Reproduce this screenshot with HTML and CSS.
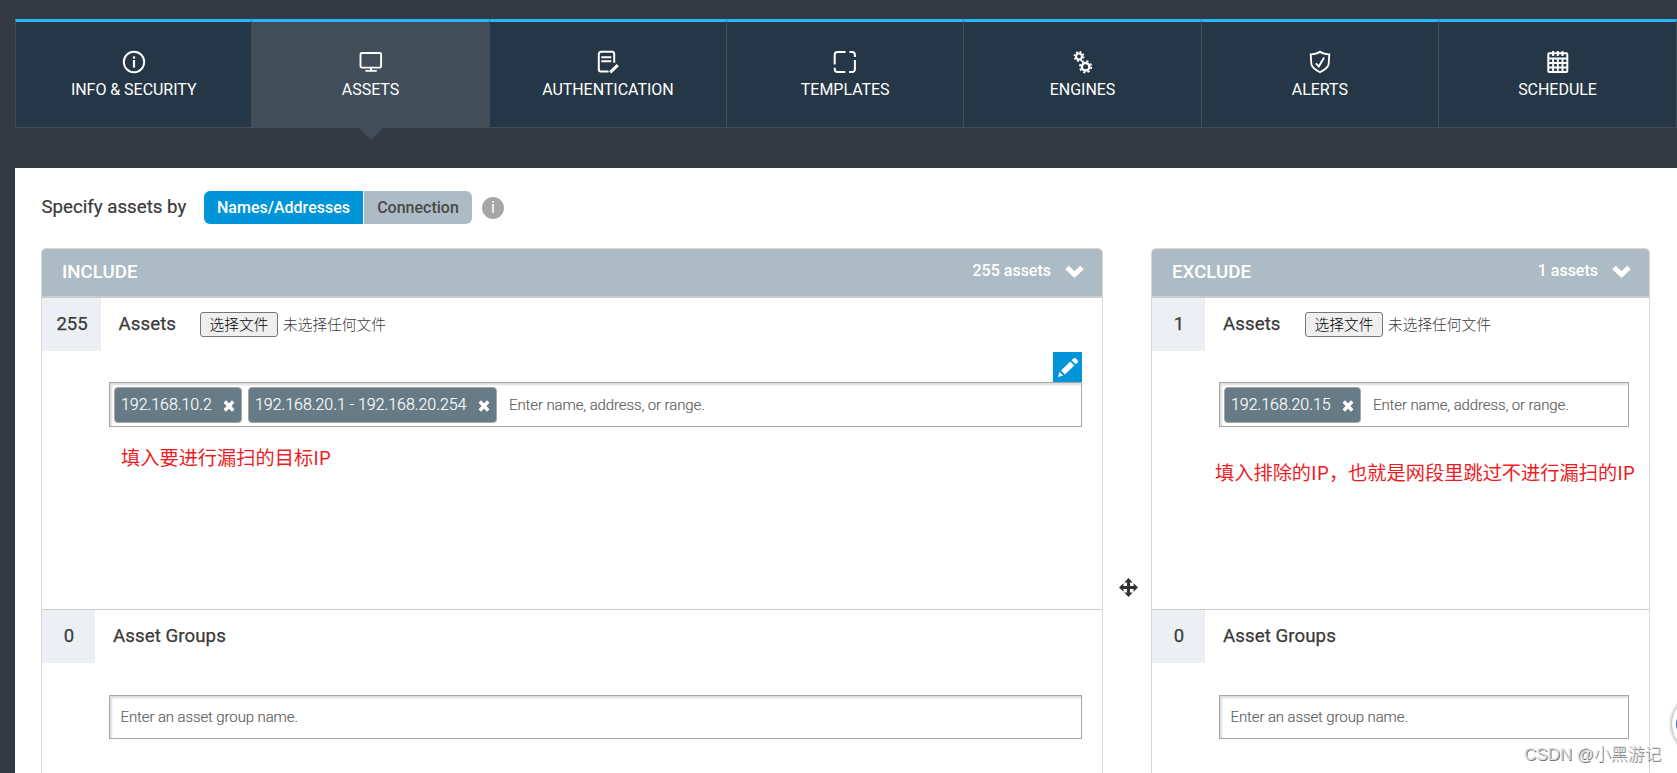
FILE: index.html
```html
<!DOCTYPE html>
<html lang="zh-CN">
<head>
<meta charset="utf-8">
<title>Site configuration</title>
<link rel="stylesheet" href="styles.css">
</head>
<body>
<nav class="tabs">
  <a class="tab"><svg class="tab-icon" viewBox="0 0 24 24"><circle cx="12" cy="12" r="10.2" stroke-width="1.9"/><path d="M12 10v7.6" stroke-width="2.2"/><path d="M12 6.4v2.2" stroke-width="2.2"/></svg><span class="tab-label">INFO &amp; SECURITY</span></a>
  <a class="tab active"><svg class="tab-icon" viewBox="0 0 24 24"><rect x="1.5" y="3" width="20.6" height="14.6" rx="1.4" stroke-width="1.9"/><path d="M12 17.6v3M6.4 20.9h11.4" stroke-width="1.9"/></svg><span class="tab-label">ASSETS</span></a>
  <a class="tab"><svg class="tab-icon" viewBox="0 0 24 24"><path d="M18.2 12.8V4a2.2 2.2 0 0 0-2.2-2.2H5A2.2 2.2 0 0 0 2.8 4v15.3A2.2 2.2 0 0 0 5 21.500h7.600M5.300 7.200h10M5.300 11.200h10" stroke-width="2"/><path d="M14.200 22.300l7.600-7.200" stroke-width="3"/></svg><span class="tab-label">AUTHENTICATION</span></a>
  <a class="tab"><svg class="tab-icon" viewBox="0 0 24 24"><path d="M12.500 1.900H4.500A2.800 2.800 0 0 0 1.700 4.700V14.600M1.700 17.800v1.400A2.800 2.800 0 0 0 4.500 22h7.800M16.500 1.900h2.600A2.800 2.800 0 0 1 21.900 4.700V7M21.900 10v9.200A2.800 2.800 0 0 1 19.100 22h-3" stroke-width="2"/></svg><span class="tab-label">TEMPLATES</span></a>
  <a class="tab"><svg class="tab-icon" viewBox="0 0 24 24"><circle cx="8" cy="6.500" r="2.900" stroke-width="2"/><circle cx="8" cy="6.500" r="4.500" stroke-width="1.900" stroke-dasharray="1.770 1.770"/><circle cx="14.600" cy="16.800" r="3.700" stroke-width="2.400"/><circle cx="14.600" cy="16.800" r="5.600" stroke-width="2" stroke-dasharray="2.200 2.200"/></svg><span class="tab-label">ENGINES</span></a>
  <a class="tab"><svg class="tab-icon" viewBox="0 0 24 24"><path d="M12 1.700Q8.500 4.300 2.700 4.300L3.400 14.500Q4.500 18.500 12 22.200Q19.500 18.500 20.600 14.500L21.300 4.300Q15.500 4.300 12 1.700Z" stroke-width="1.800"/><path d="M7.800 13.300l3 3.200 5.300-9" stroke-width="1.900"/></svg><span class="tab-label">ALERTS</span></a>
  <a class="tab"><svg class="tab-icon" viewBox="0 0 24 24"><rect x="2.300" y="3.300" width="19" height="18.700" rx="1" stroke-width="2"/><path d="M2.300 8.500h19M2.300 13h19M2.300 17.500h19M7.100 8.500v13.500M11.800 8.500v13.500M16.500 8.500v13.500" stroke-width="1.900"/><path d="M7.100 1v5M11.800 1v5M16.500 1v5" stroke-width="2"/></svg><span class="tab-label">SCHEDULE</span></a>
</nav>
<main class="sheet">
  <div class="specify">
    <span class="specify-label">Specify assets by</span>
    <div class="switch"><button class="choice chosen">Names/Addresses</button><button class="choice">Connection</button></div>
    <span class="info">i</span>
  </div>
  <div class="columns">
    <section class="panel include">
      <header class="panel-head"><h2 class="title">INCLUDE</h2><span class="total">255 assets</span><svg class="chevron" viewBox="0 0 19 14"><path d="M2 3.500l7.500 7 7.500-7" fill="none" stroke="#fff" stroke-width="5"/></svg></header>
      <div class="group first">
        <div class="group-head"><span class="count wide">255</span><span class="name">Assets</span><button class="file">选择文件</button><span class="nofile">未选择任何文件</span></div>
        <div class="edit"><svg viewBox="0 0 29 30" width="29" height="30"><path d="M5 25l1.500-5 3.700 3.600zM8 18.500l9.300-9 4 4-9.300 9zM18.600 8.300l1.900-1.900q1.200-.8 2.400.2l1.700 1.700q.8 1.100 0 2.100l-2 1.900z" fill="#fff"/></svg></div>
        <div class="field"><span class="tag t1"><span>192.168.10.2</span><svg class="x" viewBox="0 0 12 12"><path d="M1.800 1.500l8.400 9M10.200 1.500l-8.400 9"/></svg></span><span class="tag t2"><span>192.168.20.1 - 192.168.20.254</span><svg class="x" viewBox="0 0 12 12"><path d="M1.800 1.500l8.400 9M10.200 1.500l-8.400 9"/></svg></span><span class="hint">Enter name, address, or range.</span></div>
        <p class="note">填入要进行漏扫的目标IP</p>
      </div>
      <div class="group">
        <div class="group-head"><span class="count">0</span><span class="name">Asset Groups</span></div>
        <div class="field low"><span class="hint">Enter an asset group name.</span></div>
      </div>
    </section>
    <div class="gutter"><svg viewBox="0 0 18 18" width="19" height="19"><path d="M9 0l4 4.200h-2.600v3.400h3.400V5L18 9l-4.200 4v-2.600h-3.400v3.400H13L9 18l-4-4.200h2.600v-3.400H4.200V13L0 9l4.200-4v2.600h3.400V4.200H5z" fill="#333"/></svg></div>
    <section class="panel exclude">
      <header class="panel-head"><h2 class="title">EXCLUDE</h2><span class="total">1 assets</span><svg class="chevron" viewBox="0 0 19 14"><path d="M2 3.500l7.500 7 7.500-7" fill="none" stroke="#fff" stroke-width="5"/></svg></header>
      <div class="group first">
        <div class="group-head"><span class="count">1</span><span class="name">Assets</span><button class="file">选择文件</button><span class="nofile">未选择任何文件</span></div>
        <div class="spacer"></div>
        <div class="field"><span class="tag t3"><span>192.168.20.15</span><svg class="x" viewBox="0 0 12 12"><path d="M1.800 1.500l8.400 9M10.200 1.500l-8.400 9"/></svg></span><span class="hint">Enter name, address, or range.</span></div>
        <p class="note">填入排除的IP，也就是网段里跳过不进行漏扫的IP</p>
      </div>
      <div class="group">
        <div class="group-head"><span class="count">0</span><span class="name">Asset Groups</span></div>
        <div class="field low"><span class="hint">Enter an asset group name.</span></div>
      </div>
    </section>
  </div>
</main>
<div class="assistant"></div>
<div class="watermark">CSDN @小黑游记</div>
</body>
</html>
```
FILE: styles.css
```css
* { box-sizing: border-box; }
body { margin: 0; height: 773px; overflow: hidden; background: #333a44; color: #3a3a3a; font-family: Roboto, "Noto Sans CJK SC", sans-serif; position: relative; }
.tabs { display: flex; margin: 19px 0 0 15px; height: 109px; }
.tab { flex: none; width: 237.350px; display: flex; flex-direction: column; align-items: center; padding-top: 28px; background: #253746; color: #fff; border-top: 3px solid #25b7ff; border-right: 1px solid #414d59; border-bottom: 1px solid #414d59; position: relative; }
.tab:first-child { border-left: 1px solid #414d59; }
.tab:last-child { width: 237.900px; }
.active { background: #414d59; }
.active::after { content: ""; position: absolute; top: 100%; left: 50%; margin: 1px 0 0 -12px; border: 12px solid transparent; border-top-color: #414d59; border-bottom: 0; }
.tab-icon { width: 24px; height: 24px; fill: none; stroke: #fff; }
.tab-label { font-size: 16px; line-height: 20px; margin-top: 6px; letter-spacing: -.04px; white-space: nowrap; }
.sheet { margin: 40px 0 0 15px; height: 605px; background: #fff; padding: 23px 27px 0 26px; overflow: hidden; }
.specify { display: flex; height: 33px; align-items: center; }
.specify-label { font-size: 18.700px; width: 163px; padding: 0 0 2px .5px; white-space: nowrap; -webkit-text-stroke: .2px; }
.switch { display: flex; gap: 1px; height: 33px; }
.choice { border: 0; padding: 0; width: 108px; font: 500 16px Roboto, sans-serif; background: #adbbc4; color: #484848; border-radius: 0 6px 6px 0; }
.chosen { width: 159px; background: #0094d8; color: #fff; border-radius: 6px 0 0 6px; }
.info { margin: 1px 0 0 10px; width: 22px; height: 22px; border-radius: 50%; background: #a6a6a6; color: #fff; font-size: 16px; line-height: 22px; text-align: center; }
.columns { display: flex; margin-top: 24px; height: 560px; }
.panel { border: 1px solid #d9d9d9; border-radius: 5px 5px 0 0; }
.include { width: 1062px; }
.gutter { width: 48px; padding: 330px 0 0 16px; }
.exclude { width: 499px; }
.panel-head { height: 49px; display: flex; background: #adbbc4; border-bottom: 2px solid #ccc; border-radius: 4px 4px 0 0; color: #fff; line-height: 44px; padding: 0 18px 0 20px; }
.title { margin: 0 auto 0 0; font-size: 18.700px; font-weight: 500; line-height: 46px; }
.total { font-size: 16px; font-weight: 500; }
.chevron { width: 19px; height: 14px; margin: 15px 0 0 14px; }
.group-head { display: flex; height: 53px; line-height: 52px; }
.count { width: 53px; background: #ecf0f5; font-size: 18.500px; text-align: center; padding-left: 1px; -webkit-text-stroke: .25px; }
.wide { width: 59px; }
.name { font-size: 18.700px; margin-left: 18px; width: 83px; letter-spacing: .06px; white-space: nowrap; -webkit-text-stroke: .25px; }
.wide + .name { margin-left: 17px; padding-left: .5px; }
.file { width: 78px; height: 25px; margin: 14px 0 0 -1px; padding: 0 0 2px; border: 1px solid #767676; border-radius: 3px; background: #efefef; color: #000; font: 300 14.700px "Noto Sans CJK SC", sans-serif; line-height: 20px; }
.nofile { font: 300 14.700px/23px "Noto Sans CJK SC", sans-serif; margin: 14px 0 0 5px; }
.group.first { height: 312px; border-bottom: 1px solid #ccc; }
.edit { display: flex; justify-content: flex-end; height: 31px; margin: 1px 20px 0 0; }
.edit svg { background: #0094d8; }
.spacer { height: 32px; }
.field { margin: -1px 20px 0 67px; height: 45px; border: 1px solid #a6a6a6; box-shadow: inset 2px 2px 2px #ddd; display: flex; align-items: center; padding-left: 4px; }
.low { height: 44px; margin-top: 32px; padding: 0; }
.tag { height: 36px; display: flex; align-items: center; justify-content: space-between; padding: 0 6px; border: 1px solid #a6a6a6; border-radius: 4px; background: #667b85; color: #fff; font-size: 16px; font-weight: 300; letter-spacing: -.05px; -webkit-text-stroke: .15px; margin-right: 6px; white-space: nowrap; }
.t1 { width: 128px; }
.t2 { width: 249px; }
.t3 { width: 137px; }
.x { width: 12px; height: 12px; margin-top: 3px; stroke: #fff; stroke-width: 3.400; fill: none; }
.hint { font-size: 15px; font-weight: 300; letter-spacing: -.11px; -webkit-text-stroke: .15px; margin-left: 6px; color: #606060; }
.low .hint { margin-left: 10.500px; }
.note { margin: 15px 0 0 79px; color: #ed1c24; font: 400 19.230px/30px "Noto Sans CJK SC", sans-serif; white-space: nowrap; }
.exclude .note { margin: 30px 0 0 63px; }
.watermark { position: absolute; left: 1524px; top: 741px; font: 300 16.900px/28px "Liberation Sans", "Noto Sans CJK SC", sans-serif; color: #ddd; text-shadow: 1px 1px 0 #777; white-space: nowrap; }
.assistant { position: absolute; left: 1672px; top: 696px; width: 56px; height: 56px; border-radius: 50%; background: #fff; box-shadow: 0 0 4px #777; }
.assistant::after { content: ""; position: absolute; left: 4px; top: 14px; width: 28px; height: 28px; border-radius: 50%; background: #3e62d8; }
```
